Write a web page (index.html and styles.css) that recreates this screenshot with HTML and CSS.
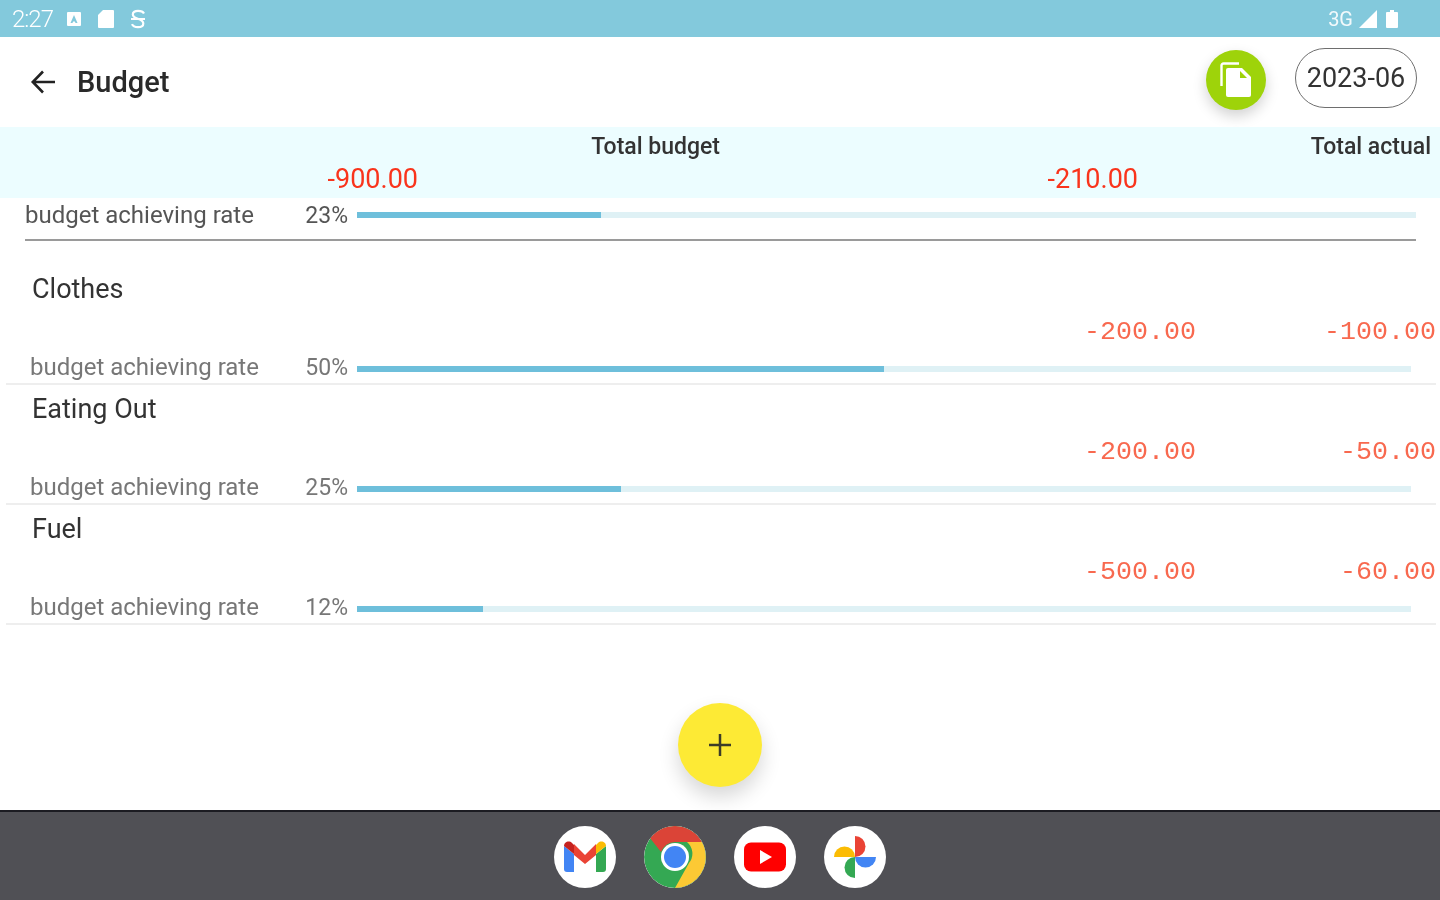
FILE: index.html
```html
<!DOCTYPE html>
<html lang="en">
<head>
<meta charset="utf-8">
<title>Budget</title>
<link rel="stylesheet" href="styles.css">
</head>
<body>
<div class="screen">
  <header class="status">
    <div class="status-side">
      <span class="clock">2:27</span>
      <svg class="st-ico" width="16" height="16" viewBox="0 0 16 16"><path fill="#fff" fill-rule="evenodd" d="M2 1h12a1 1 0 0 1 1 1v12a1 1 0 0 1-1 1H2a1 1 0 0 1-1-1V2a1 1 0 0 1 1-1zm6 3L4.500 12h2l.6-1.500h1.800l.6 1.500h2L8 4z"/></svg>
      <svg class="st-ico st-gap" width="18" height="20" viewBox="0 0 18 20"><path fill="#fff" d="M6 1h10a1 1 0 0 1 1 1v16a1 1 0 0 1-1 1H2a1 1 0 0 1-1-1V6z"/></svg>
      <svg class="st-ico st-gap" width="16" height="20" viewBox="0 0 16 20"><path fill="none" stroke="#fff" stroke-width="2.200" d="M14 4.500C13 2.500 11 1.800 8 1.800 5 1.800 2.800 3 2.800 5.500c0 5 10.500 3.500 10.500 9 0 2.500-2.300 3.700-5.300 3.700-3 0-5.200-1-6-3M1 10h14"/></svg>
    </div>
    <div class="status-side">
      <span class="net">3G</span>
      <svg width="18" height="18" viewBox="0 0 18 18"><path fill="#fff" d="M18 0v18H0z"/></svg>
      <svg class="st-batt" width="12" height="18" viewBox="0 0 12 18"><path fill="#fff" d="M4 0h4v2h3a1 1 0 0 1 1 1v14a1 1 0 0 1-1 1H1a1 1 0 0 1-1-1V3a1 1 0 0 1 1-1h3z"/></svg>
    </div>
  </header>

  <div class="toolbar">
    <svg class="back" width="26" height="26" viewBox="0 0 26 26"><path fill="none" stroke="#222" stroke-width="2.600" d="M25 13H3M13 2.500 2.800 13 13 23.500"/></svg>
    <h1 class="title">Budget</h1>
    <button class="copy-btn" type="button" aria-label="Copy">
      <svg width="32" height="36" viewBox="0 0 32 36"><path fill="none" stroke="#fff" stroke-width="2.400" d="M1.500 24V3.500a2 2 0 0 1 2-2H19"/><path fill="#fff" d="M8 6h14l9 9v18a2 2 0 0 1-2 2H8a2 2 0 0 1-2-2V8a2 2 0 0 1 2-2z"/><path fill="#9ed30a" d="M20 9l7 7h-7z"/></svg>
    </button>
    <div class="date-pill">2023-06</div>
  </div>

  <section class="totals">
    <div class="total-col"><div class="total-label">Total budget</div><div class="total-value">-900.00</div></div>
    <div class="total-col"><div class="total-label right">Total actual</div><div class="total-value">-210.00</div></div>
  </section>

  <div class="summary-rate">
    <span class="rate-label">budget achieving rate</span>
    <span class="rate-pct">23%</span>
    <div class="track"><div class="fill" style="width:23%"></div></div>
  </div>

  <ul class="rows">
    <li class="row">
      <div class="row-name">Clothes</div>
      <div class="amounts"><span class="amount">-200.00</span><span class="amount">-100.00</span></div>
      <div class="row-rate"><span class="rate-label">budget achieving rate</span><span class="rate-pct">50%</span><div class="track"><div class="fill" style="width:50%"></div></div></div>
    </li>
    <li class="row">
      <div class="row-name">Eating Out</div>
      <div class="amounts"><span class="amount">-200.00</span><span class="amount">-50.00</span></div>
      <div class="row-rate"><span class="rate-label">budget achieving rate</span><span class="rate-pct">25%</span><div class="track"><div class="fill" style="width:25%"></div></div></div>
    </li>
    <li class="row">
      <div class="row-name">Fuel</div>
      <div class="amounts"><span class="amount">-500.00</span><span class="amount">-60.00</span></div>
      <div class="row-rate"><span class="rate-label">budget achieving rate</span><span class="rate-pct">12%</span><div class="track"><div class="fill" style="width:12%"></div></div></div>
    </li>
  </ul>

  <button class="fab" type="button" aria-label="Add">
    <svg width="22" height="22" viewBox="0 0 22 22"><path fill="none" stroke="#3c3c28" stroke-width="2.500" d="M0 11h22M11 0v22"/></svg>
  </button>

  <footer class="dock">
    <div class="app">
      <svg width="42" height="32" viewBox="0 0 42 32">
        <path fill="#4285f4" d="M0 5v23a3 3 0 0 0 3 3h7V13z"/>
        <path fill="#34a853" d="M32 13v18h7a3 3 0 0 0 3-3V5z"/>
        <path fill="#ea4335" d="M10 14V3L21 14 32 3v11L21 23z"/>
        <path fill="#c5221f" d="M0 5c0-4 5-6 8-3l2 2v9z"/>
        <path fill="#fbbc04" d="M42 5c0-4-5-6-8-3l-2 2v9z"/>
      </svg>
    </div>
    <div class="app app-chrome">
      <svg width="62" height="62" viewBox="0 0 62 62">
        <circle cx="31" cy="31" r="31" fill="#34a853"/>
        <path fill="#db4437" d="M31 0a31 31 0 0 1 27 16H31a15 15 0 0 0-14 10L6 12A31 31 0 0 1 31 0z"/>
        <path fill="#fcc934" d="M58 16a31 31 0 0 1-27 46l14-25a15 15 0 0 0-2-21z"/>
        <circle cx="31" cy="31" r="14" fill="#fff"/>
        <circle cx="31" cy="31" r="11" fill="#4285f4"/>
      </svg>
    </div>
    <div class="app">
      <svg width="42" height="30" viewBox="0 0 42 30">
        <rect width="42" height="29" y=".5" rx="7" fill="#f00"/>
        <path fill="#fff" d="M16 8l12 7-12 7z"/>
      </svg>
    </div>
    <div class="app">
      <svg width="44" height="44" viewBox="0 0 44 44">
        <path fill="#ea4335" d="M22 22V1a10.500 10.500 0 0 1 0 21z"/>
        <path fill="#4285f4" d="M22 22h21a10.500 10.500 0 0 1-21 0z"/>
        <path fill="#34a853" d="M22 22v21a10.500 10.500 0 0 1 0-21z"/>
        <path fill="#fbbc04" d="M22 22H1a10.500 10.500 0 0 1 21 0z"/>
      </svg>
    </div>
  </footer>
</div>
</body>
</html>
```
FILE: styles.css
```css
* { box-sizing: border-box; }
html, body { margin: 0; padding: 0; }
body { width: 1440px; height: 900px; overflow: hidden; background: #fff; font-family: Roboto, "Liberation Sans", sans-serif; color: #222; }
.screen { position: relative; width: 1440px; height: 900px; display: flex; flex-direction: column; }
.status, .toolbar, .totals, .summary-rate, .rows { filter: blur(0.6px); }

.status { height: 37px; background: #83c9dc; color: #fff; display: flex; justify-content: space-between; align-items: center; padding: 0 42px 0 12px; }
.status-side { display: flex; align-items: center; }
.clock { font-size: 24px; font-weight: 300; letter-spacing: -1px; margin-right: 13px; }
.st-gap { margin-left: 15px; }
.net { font-size: 20px; font-weight: 400; margin-right: 6px; opacity: .9; }
.st-batt { margin-left: 9px; }

.toolbar { height: 90px; display: flex; align-items: center; padding-left: 30px; padding-right: 23px; }
.back { flex: none; }
.title { margin: 0 0 0 21px; font-size: 29px; font-weight: 500; color: #2a2a2a; flex: 1; }
.copy-btn { width: 60px; height: 60px; margin-top: -4px; border: 0; padding: 0; border-radius: 50%; background: #9ed30a; box-shadow: 0 6px 14px rgba(0,0,0,.18); display: flex; align-items: center; justify-content: center; }
.date-pill { width: 122px; height: 60px; margin: -8px 0 0 29px; border: 1.500px solid #6e6e6e; border-radius: 30px; display: flex; align-items: center; justify-content: center; font-size: 27px; color: #333; }

.totals { height: 71px; background: #ecfdff; display: grid; grid-template-columns: 720px 720px; }
.total-col { display: flex; flex-direction: column; padding-top: 6px; }
.total-label { font-size: 23px; font-weight: 500; line-height: 28px; text-align: right; color: #333; }
.total-label.right { padding-right: 9px; }
.total-value { font-size: 27px; line-height: 36px; color: #f9341c; text-align: right; padding-right: 302px; }

.summary-rate { height: 43px; margin: 0 24px 0 25px; border-bottom: 2px solid #9a9a9a; display: flex; align-items: center; padding-bottom: 7px; color: #555; }
.summary-rate .rate-label { font-size: 24px; width: 280px; font-weight: 400; }
.rate-label { font-size: 24px; flex: none; }
.rate-pct { font-size: 23px; width: 43px; flex: none; text-align: right; margin-right: 9px; }
.track { flex: 1; height: 6px; background: #dff1f5; }
.fill { height: 100%; background: #6ebfdb; }

.rows { list-style: none; margin: 24px 0 0; padding: 0; }
.row { height: 120px; margin: 0 4px 0 6px; border-bottom: 2px solid #eeeeee; display: flex; flex-direction: column; }
.row-name { height: 48px; font-size: 27px; line-height: 48px; padding-left: 26px; color: #333; }
.amounts { height: 38px; display: flex; justify-content: flex-end; }
.amount { width: 240px; text-align: right; font-family: "Liberation Mono", monospace; font-size: 26.670px; line-height: 38px; color: #f8694f; }
.row-rate { height: 38px; display: flex; align-items: center; padding: 0 25px 0 24px; color: #777; }
.row-rate .rate-label { width: 275px; }
.row-rate .track { margin-top: 4px; }

.fab { position: absolute; left: 678px; top: 703px; width: 84px; height: 84px; border: 0; padding: 0; border-radius: 50%; background: #fdea35; box-shadow: 0 10px 20px rgba(0,0,0,.16); display: flex; align-items: center; justify-content: center; }

.dock { position: absolute; left: 0; right: 0; bottom: 0; height: 90px; background: #505055; border-top: 2px solid #1c1c22; display: flex; align-items: center; justify-content: center; gap: 28px; padding-top: 1px; }
.app { width: 62px; height: 62px; border-radius: 50%; background: #fff; display: flex; align-items: center; justify-content: center; flex: none; overflow: hidden; }
```
